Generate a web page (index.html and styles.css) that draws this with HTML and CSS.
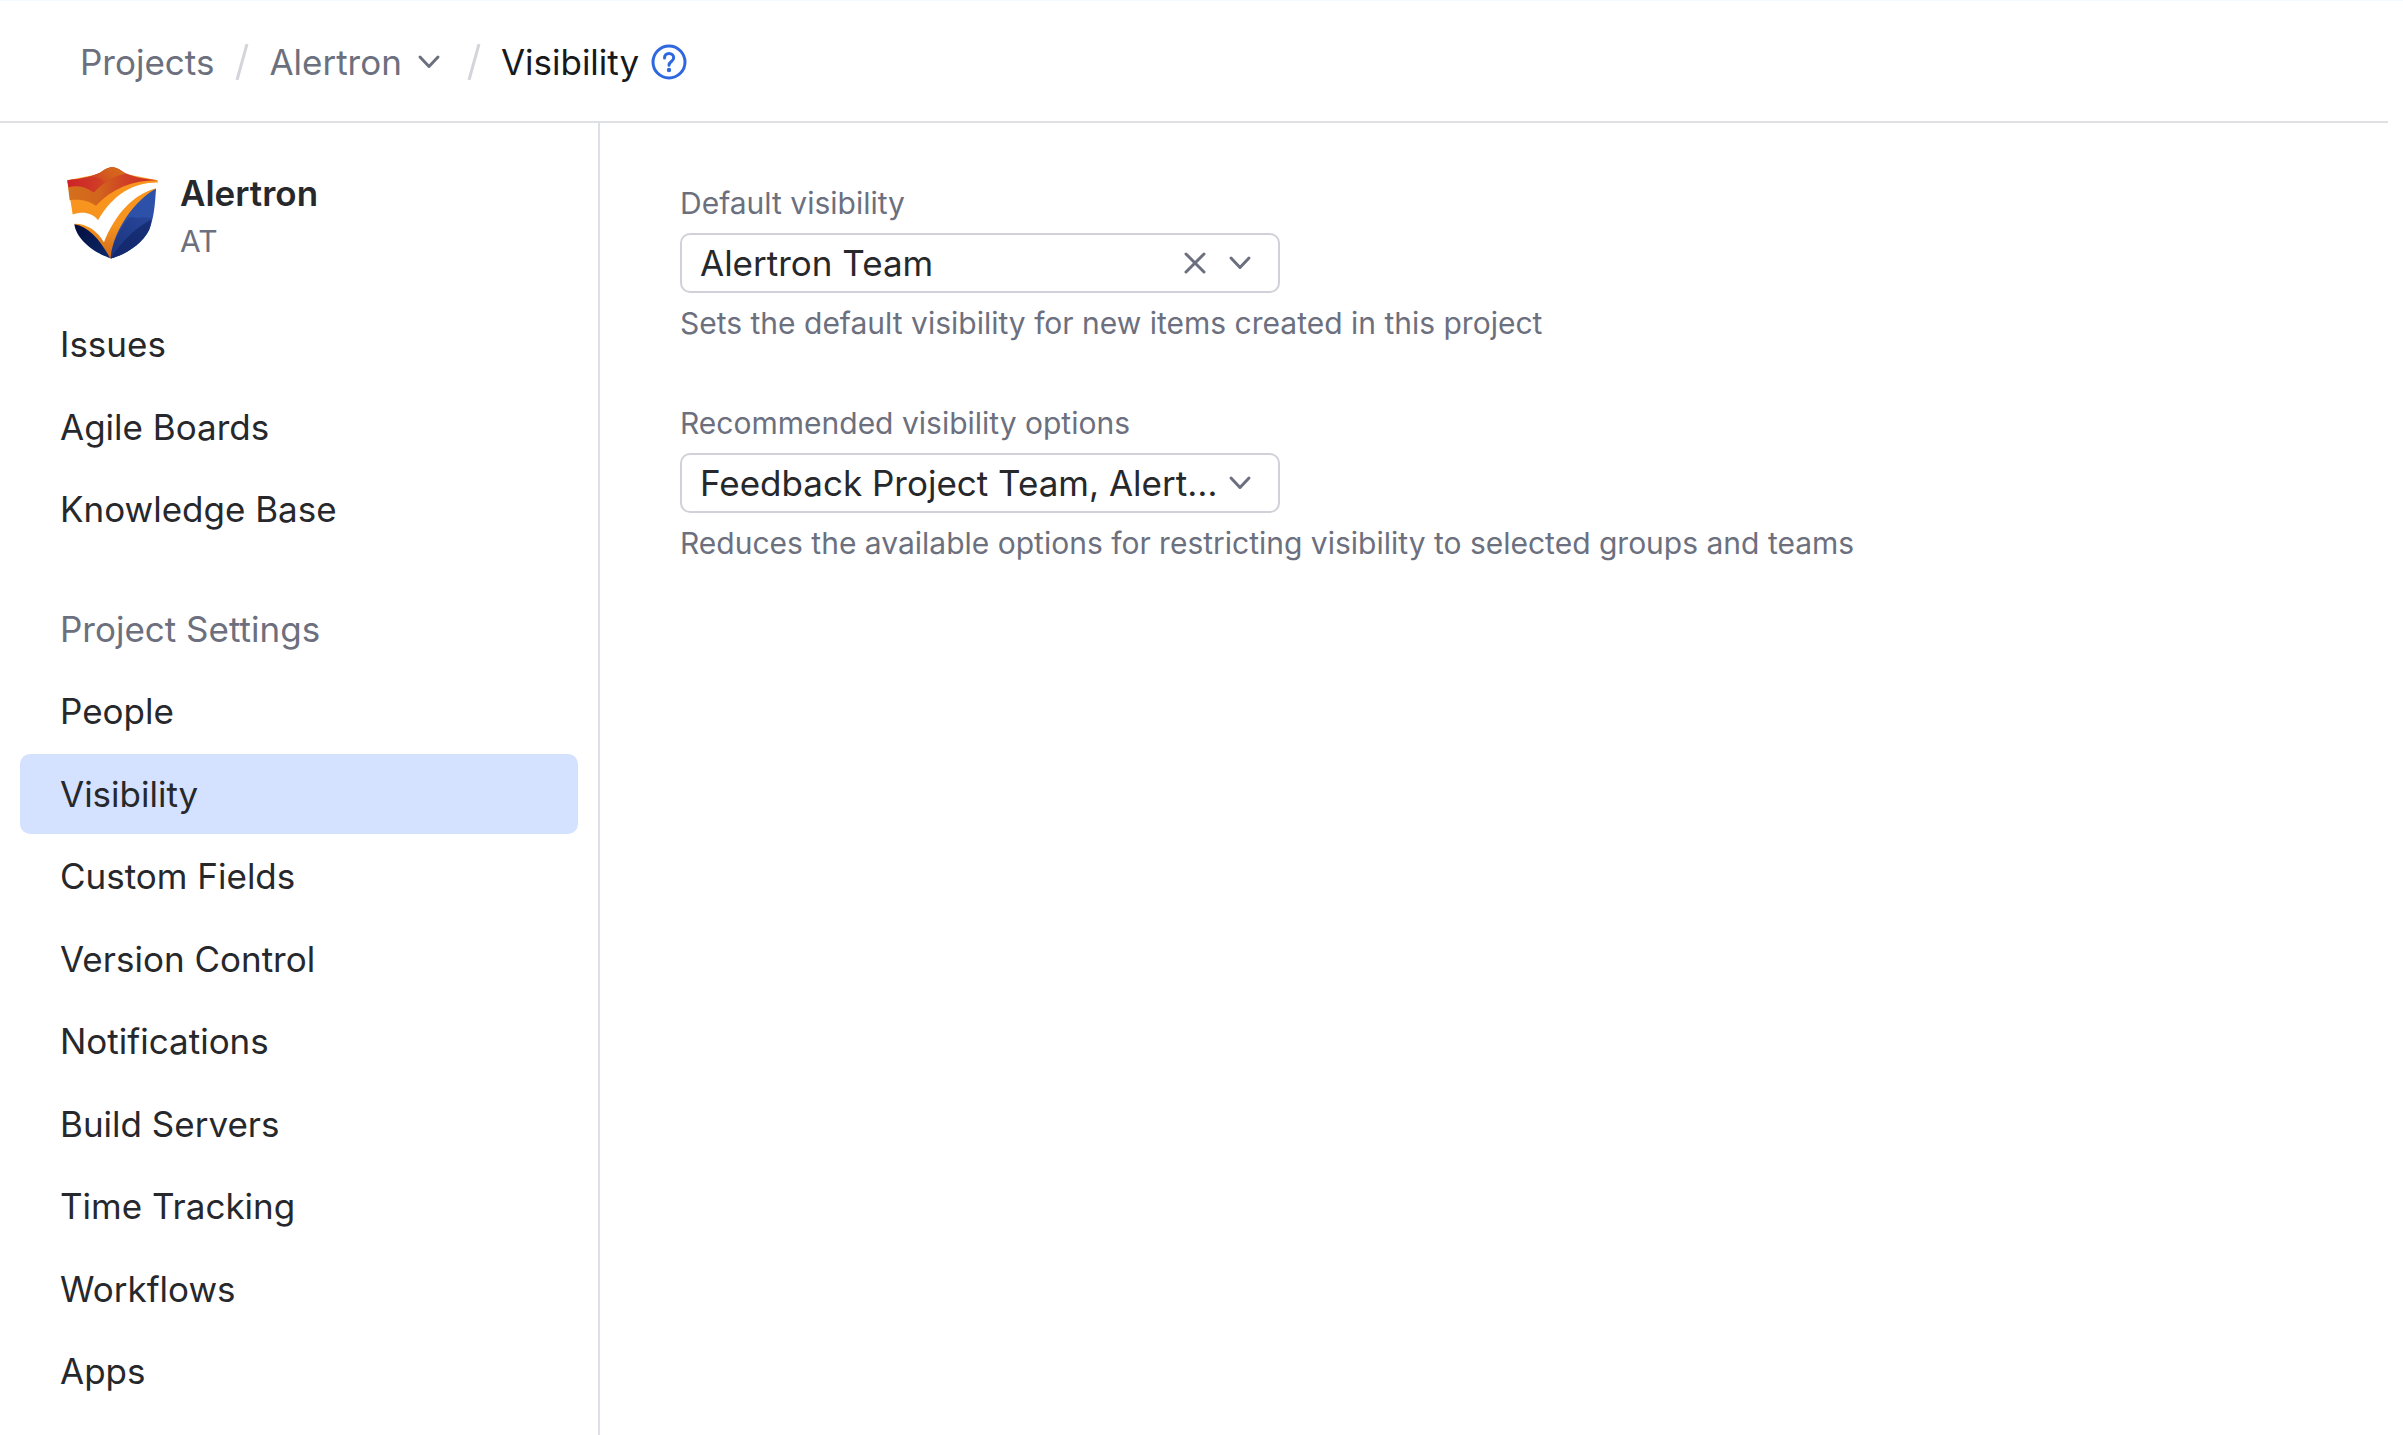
FILE: index.html
```html
<!DOCTYPE html>
<html lang="en">
<head>
  <meta charset="utf-8">
  <title>Visibility – Alertron</title>
  <link rel="stylesheet" href="styles.css">
</head>
<body>
  <header class="topbar">
    <nav class="breadcrumbs" aria-label="Breadcrumbs">
      <a class="crumb" href="#">Projects</a>
      <svg class="slash" viewBox="0 0 14 36" aria-hidden="true"><path d="M12 0 2 36"/></svg>
      <button class="crumb crumb-menu" type="button">
        Alertron
        <svg class="icon" viewBox="0 0 40 40" aria-hidden="true"><path d="m11 15 9 9.500 9-9.500"/></svg>
      </button>
      <svg class="slash" viewBox="0 0 14 36" aria-hidden="true"><path d="M12 0 2 36"/></svg>
      <h1 class="crumb-current">Visibility</h1>
      <a class="help" href="#" aria-label="Help">
        <svg class="help-icon" viewBox="0 0 36 36" aria-hidden="true">
          <circle cx="18" cy="18" r="16"/>
          <path d="M13.500 14c0-2.800 2-4.500 4.500-4.500s4.700 1.700 4.700 4.300c0 3.700-4.700 3.700-4.700 7.400"/>
          <circle class="help-dot" cx="18" cy="26" r="2.200"/>
        </svg>
      </a>
    </nav>
  </header>
  <div class="layout">
    <aside class="sidebar">
      <div class="project">
        <svg class="logo" viewBox="80 52 273 275" aria-hidden="true">
          <defs>
            <linearGradient id="band" x1="0" y1="0" x2="1" y2="0">
              <stop offset="0" stop-color="#d4701c"/><stop offset=".35" stop-color="#d2651c"/>
              <stop offset=".65" stop-color="#cf3f25"/><stop offset="1" stop-color="#d02a28"/>
            </linearGradient>
            <linearGradient id="crest" x1="0" y1="0" x2="1" y2="0">
              <stop offset="0" stop-color="#cc2229"/><stop offset=".5" stop-color="#cf3a25"/>
              <stop offset="1" stop-color="#d4601c"/>
            </linearGradient>
            <linearGradient id="peak" x1="0" y1="1" x2="1" y2="0">
              <stop offset="0" stop-color="#d4701c" stop-opacity="0"/><stop offset="1" stop-color="#d6681b"/>
            </linearGradient>
            <linearGradient id="navy" x1="0" y1="0" x2="1" y2="1">
              <stop offset="0" stop-color="#020d3b"/><stop offset="1" stop-color="#0c2a6e"/>
            </linearGradient>
            <linearGradient id="flame" x1="0" y1="0" x2="0" y2="1">
              <stop offset="0" stop-color="#f9961e"/><stop offset=".6" stop-color="#f8941e"/><stop offset="1" stop-color="#cf6a1c"/>
            </linearGradient>
            <linearGradient id="shade" x1="1" y1="0" x2="0" y2="1">
              <stop offset="0" stop-color="#243f93"/><stop offset="1" stop-color="#0f2160"/>
            </linearGradient>
          </defs>
          <path fill="url(#flame)" d="M81 91 188 70 243 70 352 91 352 98 347 117 213 326 209 324 102 222 97 194Z"/>
          <path fill="url(#band)" d="M81 91C125 88 165 79 188 63 206 49 225 49 243 63 266 79 310 89 352 91 275 91 215 116 167 168 146 152 115 147 88 151Z"/>
          <path fill="url(#crest)" d="M81 91C125 88 165 79 188 63 206 49 225 49 243 63L255 71C215 80 185 104 160 128 136 110 110 106 84 112Z"/>
          <path fill="url(#peak)" d="M137 84C158 80 176 72 188 63 206 49 225 49 243 63L255 71C232 76 212 86 194 98 180 82 160 79 137 84Z"/>
          <path fill="#fff" d="M97 194C125 184 155 188 173 211 219 133 278 98 352 98L352 115 348 115C276 134 224 195 191 277 170 244 142 222 103 222L80 222 80 194Z"/>
          <path fill="url(#navy)" d="M102 223C145 231 178 267 209 324L213 326C170 313 109 273 102 223Z"/>
          <path fill="#2d50a8" d="M347 117C344 164 341 204 326 241 306 281 255 315 211 326 215 248 281 152 347 117Z"/>
          <path fill="url(#shade)" d="M336 202C334 216 331 229 326 241 306 281 255 315 211 326 214 282 236 240 264 204 277 200 284 206 295 204 312 199 322 207 336 202Z" opacity=".6"/>
          <path fill="#0f2160" d="M331 225C329 231 328 236 326 241 306 281 255 315 211 326 240 282 270 246 331 210Z" opacity=".6"/>
        </svg>
        <div class="project-text">
          <strong class="project-name">Alertron</strong>
          <span class="project-key">AT</span>
        </div>
      </div>
      <nav class="menu" aria-label="Project">
        <ul class="menu-list menu-list-short">
          <li><a class="menu-item" href="#">Issues</a></li>
          <li><a class="menu-item" href="#">Agile Boards</a></li>
          <li><a class="menu-item" href="#">Knowledge Base</a></li>
        </ul>
        <h2 class="menu-title">Project Settings</h2>
        <ul class="menu-list menu-list-long">
          <li><a class="menu-item" href="#">People</a></li>
          <li><a class="menu-item menu-item-active" href="#" aria-current="page">Visibility</a></li>
          <li><a class="menu-item" href="#">Custom Fields</a></li>
          <li><a class="menu-item" href="#">Version Control</a></li>
          <li><a class="menu-item" href="#">Notifications</a></li>
          <li><a class="menu-item" href="#">Build Servers</a></li>
          <li><a class="menu-item" href="#">Time Tracking</a></li>
          <li><a class="menu-item" href="#">Workflows</a></li>
          <li><a class="menu-item" href="#">Apps</a></li>
        </ul>
      </nav>
    </aside>
    <main class="content">
      <div class="field">
        <label class="field-label" for="default-visibility">Default visibility</label>
        <div class="control">
          <select class="select select-clearable" id="default-visibility" aria-describedby="default-hint">
            <option>Alertron Team</option>
          </select>
          <div class="control-icons">
            <button class="clear" type="button" aria-label="Clear">
              <svg class="icon" viewBox="0 0 40 40" aria-hidden="true"><path d="m11 11 18 18M29 11 11 29"/></svg>
            </button>
            <svg class="icon" viewBox="0 0 40 40" aria-hidden="true"><path d="m11 15 9 9.500 9-9.500"/></svg>
          </div>
        </div>
        <p class="hint" id="default-hint">Sets the default visibility for new items created in this project</p>
      </div>
      <div class="field">
        <label class="field-label" for="recommended-visibility">Recommended visibility options</label>
        <div class="control">
          <select class="select" id="recommended-visibility" aria-describedby="recommended-hint">
            <option>Feedback Project Team, Alertron Team</option>
          </select>
          <div class="control-icons">
            <svg class="icon" viewBox="0 0 40 40" aria-hidden="true"><path d="m11 15 9 9.500 9-9.500"/></svg>
          </div>
        </div>
        <p class="hint" id="recommended-hint">Reduces the available options for restricting visibility to selected groups and teams</p>
      </div>
    </main>
  </div>
</body>
</html>
```
FILE: styles.css
```css
:root {
  --text: #27282c;
  --secondary: #6c707e;
  --line: #dfe0e5;
  --field-line: #d1d2d9;
  --selected: #d4e2ff;
  --link: #2e67de;
}

* {
  box-sizing: border-box;
}

body {
  display: flex;
  flex-direction: column;
  min-height: 100vh;
  margin: 0;
  border-top: 1px solid #f3f9fe;
  background: #fff;
  color: var(--text);
  font: 35px/50px Inter, "Liberation Sans", sans-serif;
}

a {
  color: inherit;
  text-decoration: none;
}

button {
  padding: 0;
  border: 0;
  background: none;
  font: inherit;
  cursor: pointer;
}

.topbar {
  display: flex;
  align-items: center;
  height: 122px;
  margin-right: 15px;
  padding: 1px 0 0 80px;
  border-bottom: 2px solid var(--line);
}

.breadcrumbs {
  display: flex;
  align-items: center;
}

.crumb {
  color: var(--secondary);
}

.crumb-menu {
  display: flex;
  align-items: center;
  gap: 7px;
}

.crumb-current {
  margin: 0;
  color: #18191b;
  font: inherit;
}

.slash {
  width: 14px;
  height: 36px;
  margin: 0 20px 0 21px;
  fill: none;
  stroke: #d3d5db;
  stroke-width: 3;
}

.crumb-menu + .slash {
  margin-left: 18px;
}

.help {
  display: flex;
  margin-left: 12px;
}

.help-icon {
  width: 36px;
  height: 36px;
  fill: none;
  stroke: var(--link);
  stroke-width: 3;
  stroke-linecap: round;
}

.help-dot {
  fill: var(--link);
  stroke: none;
}

.icon {
  display: block;
  width: 40px;
  height: 40px;
  fill: none;
  stroke: var(--secondary);
  stroke-width: 3;
  stroke-linecap: round;
  stroke-linejoin: round;
}

.layout {
  display: flex;
  flex: 1;
}

.sidebar {
  flex: 0 0 600px;
  padding: 40px 20px 20px;
  border-right: 2px solid var(--line);
}

.project {
  display: flex;
  align-items: center;
  gap: 22px;
  padding-left: 47px;
}

.logo {
  width: 91px;
  height: 92px;
}

.project-text {
  display: flex;
  flex-direction: column;
  gap: 4px;
  padding-top: 8px;
}

.project-name {
  font-weight: 600;
  line-height: 44px;
}

.project-key {
  color: var(--secondary);
  font-size: 30px;
  line-height: 44px;
}

.menu {
  margin-top: 41px;
}

.menu-list {
  display: flex;
  flex-direction: column;
  justify-content: space-between;
  margin: 0;
  padding: 0;
  list-style: none;
}

.menu-list-short {
  min-height: 245px;
}

.menu-list-long {
  min-height: 740px;
}

.menu-item {
  display: block;
  padding: 15px 40px;
  border-radius: 10px;
}

.menu-item-active {
  background: var(--selected);
}

.menu-title {
  margin: 40px 0 2px;
  padding: 15px 40px;
  color: var(--secondary);
  font: inherit;
}

.content {
  flex: 1;
  padding: 60px 80px;
}

.field {
  margin-bottom: 60px;
}

.field-label,
.hint {
  display: block;
  margin: 0;
  color: var(--secondary);
  font-size: 30px;
  line-height: 40px;
}

.control {
  display: grid;
  width: 600px;
  max-width: 100%;
  margin: 10px 0;
}

.select {
  grid-area: 1 / 1;
  width: 100%;
  height: 60px;
  padding: 0 58px 0 18px;
  overflow: hidden;
  appearance: none;
  border: 2px solid var(--field-line);
  border-radius: 10px;
  background: #fff;
  color: var(--text);
  font: inherit;
  text-overflow: ellipsis;
  white-space: nowrap;
}

.select-clearable {
  padding-right: 110px;
}

.control-icons {
  grid-area: 1 / 1;
  display: flex;
  align-items: center;
  justify-self: end;
  gap: 5px;
  padding-right: 20px;
  pointer-events: none;
}

.clear {
  pointer-events: auto;
}
```
